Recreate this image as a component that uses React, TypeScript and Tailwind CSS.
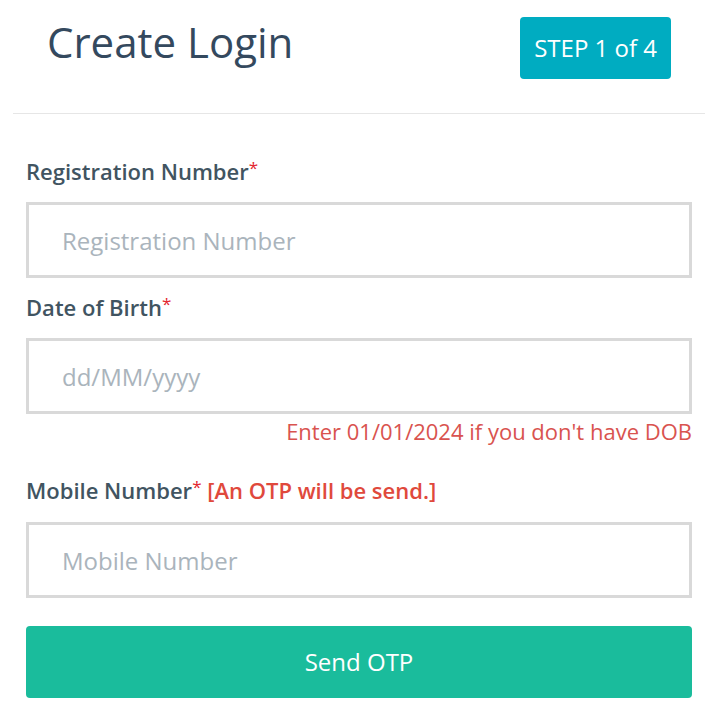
import React from 'react';

const FONT = { fontFamily: '"Open Sans", "Noto Sans", Arial, sans-serif' };

function Label({ text, hint }: { text: string; hint?: string }) {
  return (
    <div className="text-[22px] leading-[28px] font-semibold text-[#415461] whitespace-nowrap">
      {text}
      <sup className="text-[#e3262f] text-[17px] font-normal relative top-[-6px]">*</sup>
      {hint && <span className="text-[#e0493c] font-semibold"> {hint}</span>}
    </div>
  );
}

function Field({ placeholder }: { placeholder: string }) {
  return (
    <input
      type="text"
      placeholder={placeholder}
      className="block w-full h-[76px] border-[3px] border-[#d9d9d9] bg-white px-[33px] text-[24px] text-[#3e4f5b] placeholder:text-[#aab4bc] outline-none"
    />
  );
}

export default function App() {
  return (
    <div className="w-[718px] h-[704px] bg-white overflow-hidden" style={FONT}>
      {/* Header */}
      <div className="flex items-start justify-between pl-[47px] pr-[47px] pt-[17px] pb-[34px]">
        <h1 className="text-[42px] leading-[50px] font-medium text-[#34495e]">Create Login</h1>
        <div className="h-[62px] px-[14px] flex items-center rounded-[4px] bg-[#00acc1] text-white text-[24px]">
          STEP 1 of 4
        </div>
      </div>
      <div className="mx-[13px] h-px bg-[#e6e6e6]" />

      {/* Form */}
      <div className="px-[26px]">
        <div className="mt-[43px]">
          <Label text="Registration Number" />
        </div>
        <div className="mt-[17px]">
          <Field placeholder="Registration Number" />
        </div>

        <div className="mt-[15px]">
          <Label text="Date of Birth" />
        </div>
        <div className="mt-[17px]">
          <Field placeholder="dd/MM/yyyy" />
        </div>
        <div className="mt-[4px] text-right text-[22px] leading-[26px] text-[#d9534f]">
          Enter 01/01/2024 if you don't have DOB
        </div>

        <div className="mt-[32px]">
          <Label text="Mobile Number" hint="[An OTP will be send.]" />
        </div>
        <div className="mt-[18px]">
          <Field placeholder="Mobile Number" />
        </div>

        <button className="mt-[28px] w-full h-[72px] rounded-[4px] bg-[#1abc9c] text-white text-[24px]">
          Send OTP
        </button>
      </div>
    </div>
  );
}
